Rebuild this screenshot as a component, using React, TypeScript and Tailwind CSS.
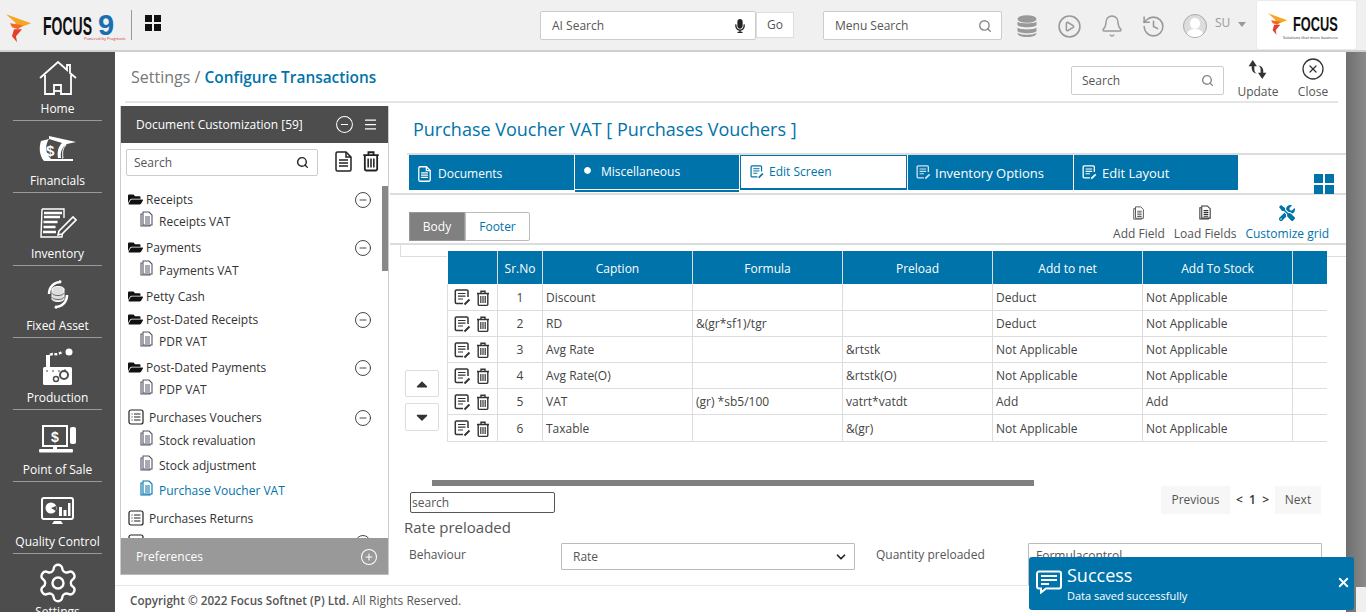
import React from "react";
import { Bell, History, CirclePlay, Search, CircleMinus, CirclePlus, CircleX, Menu, Settings, X, ChevronDown } from "lucide-react";
import { FaFolderOpen, FaMicrophone, FaTools, FaCaretUp, FaCaretDown, FaCircle } from "react-icons/fa";

const BLUE = "#0073aa";

function Flame({ s = 26 }: { s?: number }) {
  return (
    <svg width={s} height={s * 1.1} viewBox="0 0 26 28" className="shrink-0">
      <polygon points="0,0 25,9 12,14 9,8" fill="#f5a623" />
      <polygon points="4,9 17,11 12,15 6,13" fill="#f0692c" />
      <polygon points="8,15 16,15 10,22 11,28 6,22" fill="#e2402a" />
    </svg>
  );
}

function DocIcon({ color = "#444", s = 15 }: { color?: string; s?: number }) {
  return (
    <svg width={s} height={s} viewBox="0 0 16 16" fill="none" stroke={color} strokeWidth="1.1">
      <path d="M3.500 3H2v12h9v-1.500" />
      <path d="M4 1h6l3 3v10H4z" fill="#fff" />
      <path d="M6 6h5M6 8h5M6 10h5M6 12h5" />
    </svg>
  );
}

function ListBox() {
  return (
    <svg width="16" height="16" viewBox="0 0 16 16" fill="none" stroke="#222" strokeWidth="1.2">
      <rect x="1" y="1" width="14" height="14" rx="2" />
      <path d="M3.500 5h1M6 5h6.500M3.500 8h1M6 8h6.500M3.500 11h1M6 11h6.500" />
    </svg>
  );
}

function EditDoc({ color = "#333", s = 17 }: { color?: string; s?: number }) {
  return (
    <svg width={s} height={s} viewBox="0 0 17 17" fill="none" stroke={color} strokeWidth="1.5">
      <path d="M9 14.500H2.500a1.200 1.200 0 0 1-1.200-1.200V2.200A1.200 1.200 0 0 1 2.500 1h10.300A1.200 1.200 0 0 1 14 2.200V8" />
      <path d="M4 4.500h7.500M4 7.200h7.500M4 10h5" strokeWidth="1.2" />
      <path d="M10.500 15.500l5-5" strokeWidth="2" />
    </svg>
  );
}

function Trash({ color = "#333", w = 14, h = 16 }: { color?: string; w?: number; h?: number }) {
  return (
    <svg width={w} height={h} viewBox="0 0 14 16" fill="none" stroke={color} strokeWidth="1.4">
      <path d="M1 3.500h12M5 3.200V1.200h4v2" />
      <path d="M2.200 3.800v10.400a1.200 1.200 0 0 0 1.200 1.200h7.200a1.200 1.200 0 0 0 1.200-1.200V3.800" />
      <path d="M4.800 6v7M7 6v7M9.200 6v7" strokeWidth="1.2" />
    </svg>
  );
}

function PageIcon({ color = "#222", w = 17, h = 21, sw = 1.5 }: { color?: string; w?: number; h?: number; sw?: number }) {
  return (
    <svg width={w} height={h} viewBox="0 0 17 21" fill="none" stroke={color} strokeWidth={sw}>
      <path d="M2.500 1H11l5 5v12.500a1.500 1.500 0 0 1-1.500 1.500h-12A1.500 1.500 0 0 1 1 18.500v-16A1.500 1.500 0 0 1 2.500 1z" />
      <path d="M11 1v5h5" />
      <path d="M4 9h9M4 12h9M4 15h9" />
    </svg>
  );
}

function HouseIcon() {
  return (
    <svg width="38" height="34" viewBox="0 0 38 34" fill="none" stroke="#fff" strokeWidth="1.8">
      <path d="M1 17L19 1l9 8V4h3v8l6 5" strokeLinejoin="miter" />
      <path d="M6 14v19h9v-9h7v9h10V14" />
      <path d="M15 30h7" />
    </svg>
  );
}

function FinIcon() {
  return (
    <svg width="38" height="30" viewBox="0 0 38 30" fill="none">
      <path d="M2 6l8-2c-4 6-4 14 2 20H34v2H5C0 20 0 12 2 6z" fill="#fff" />
      <path d="M10 1l27 6-9 2c-5 3-7 8-6 14h-3c-1-6 0-11 4-15L10 4z" fill="#fff" />
      <path d="M27 10c-3 3-4 7-3 13h-1" stroke="#fff" />
      <text x="7" y="21" fontSize="15" fontWeight="700" fill="#fff" fontFamily="Liberation Sans">$</text>
    </svg>
  );
}

function InvIcon() {
  return (
    <svg width="38" height="32" viewBox="0 0 38 32" fill="none" stroke="#fff" strokeWidth="1.4">
      <path d="M3 2h22v9M3 2l-1 28h21l1-7" />
      <path d="M5 6h18M5 10h16M4.500 15h14M4.500 20h12M4 25h13" strokeWidth="2.400" />
      <path d="M20 24l14-14 3 3-14 14-4 1z" fill="#4d4d4d" strokeWidth="1.600" />
    </svg>
  );
}

function AssetIcon() {
  return (
    <svg width="24" height="29" viewBox="0 0 24 29" fill="none" stroke="#fff">
      <path d="M3 14C3 7 8 2 15 2l-2-1M21 15c0 7-5 12-12 12l2 1" strokeWidth="2.500" />
      <ellipse cx="12" cy="9" rx="6" ry="2.500" fill="#ddd" />
      <path d="M6 9v10c0 1.500 3 2.500 6 2.500s6-1 6-2.500V9" fill="#ddd" />
      <path d="M6 13c0 1.500 3 2.500 6 2.500s6-1 6-2.500M6 17c0 1.500 3 2.500 6 2.500s6-1 6-2.500" stroke="#666" />
    </svg>
  );
}

function ProdIcon() {
  return (
    <svg width="32" height="37" viewBox="0 0 32 37" fill="#fff">
      <rect x="4" y="7" width="4" height="14" />
      <path d="M8 7c3-2 5 0 8-1s3-2 5-2" stroke="#fff" strokeWidth="2.400" fill="none" strokeDasharray="3 1.500" />
      <circle cx="27" cy="4" r="3.500" />
      <rect x="1" y="19" width="29" height="18" rx="1.500" />
      <circle cx="22" cy="27" r="4" fill="none" stroke="#4d4d4d" strokeWidth="2" />
      <circle cx="14" cy="31" r="2.500" fill="none" stroke="#4d4d4d" strokeWidth="1.500" />
      <path d="M4 23h2M10 23h2M16 23h2M22 22h2" stroke="#4d4d4d" />
    </svg>
  );
}

function PosIcon() {
  return (
    <svg width="38" height="28" viewBox="0 0 38 28" fill="none">
      <rect x="4" y="1" width="24" height="20" stroke="#fff" strokeWidth="2" />
      <rect x="31" y="2" width="6" height="17" rx="2" fill="#fff" />
      <path d="M14 21h4v3h-4z" fill="#fff" />
      <rect x="0" y="24" width="34" height="3.500" rx="1" fill="#fff" />
      <text x="12" y="17" fontSize="14" fontWeight="700" fill="#fff" fontFamily="Liberation Sans">$</text>
    </svg>
  );
}

function QcIcon() {
  return (
    <svg width="33" height="28" viewBox="0 0 33 28" fill="none">
      <rect x="1" y="1" width="31" height="21" rx="2" stroke="#fff" strokeWidth="2" />
      <circle cx="10" cy="11" r="5.500" fill="#fff" />
      <path d="M10 11l5-2v5z" fill="#4d4d4d" />
      <path d="M18 10h3v9h-3zM22.500 13h3v6h-3zM27 6h2.500v13H27z" fill="#fff" />
      <path d="M13 24h7l2 3H11z" fill="#fff" />
    </svg>
  );
}

const navItems: [string, React.ReactNode][] = [
  ["Home", <HouseIcon key="h" />],
  ["Financials", <FinIcon key="f" />],
  ["Inventory", <InvIcon key="i" />],
  ["Fixed Asset", <AssetIcon key="a" />],
  ["Production", <ProdIcon key="p" />],
  ["Point of Sale", <PosIcon key="s" />],
  ["Quality Control", <QcIcon key="q" />],
];

type TreeRow = { t: string; kind: "folder" | "list" | "doc" | "active"; h: number; minus?: boolean };
const tree: TreeRow[] = [
  { t: "Receipts", kind: "folder", h: 22, minus: true },
  { t: "Receipts VAT", kind: "doc", h: 26 },
  { t: "Payments", kind: "folder", h: 23, minus: true },
  { t: "Payments VAT", kind: "doc", h: 26 },
  { t: "Petty Cash", kind: "folder", h: 23 },
  { t: "Post-Dated Receipts", kind: "folder", h: 22, minus: true },
  { t: "PDR VAT", kind: "doc", h: 26 },
  { t: "Post-Dated Payments", kind: "folder", h: 22, minus: true },
  { t: "PDP VAT", kind: "doc", h: 28 },
  { t: "Purchases Vouchers", kind: "list", h: 23, minus: true },
  { t: "Stock revaluation", kind: "doc", h: 25 },
  { t: "Stock adjustment", kind: "doc", h: 25 },
  { t: "Purchase Voucher VAT", kind: "active", h: 28 },
  { t: "Purchases Returns", kind: "list", h: 24 },
  { t: "", kind: "list", h: 24, minus: true },
];

const tabs: [string, React.ReactNode, string][] = [
  ["Documents", <PageIcon key="d" color="#fff" w={13} h={16} sw={1.7} />, "w-[165px] h-[35px] pl-[9px] gap-[7px] pt-[2px] bg-[#0073aa] text-white"],
  ["Miscellaneous", <FaCircle key="m" size={7} color="#fff" className="mb-[3px]" />, "w-[164px] h-[35px] pl-[9px] gap-[10px] bg-[#0073aa] text-white border-b-[1px] border-white shadow-[0_2px_0_#0073aa]"],
  ["Edit Screen", <EditDoc key="e" color={BLUE} s={14} />, "w-[167px] h-[35px] pl-[9px] gap-[5px] bg-white text-[#0073aa] border border-[#0073aa] border-b-2"],
  ["Inventory Options", <EditDoc key="n" color="#cfe3ee" s={15} />, "w-[165px] h-[35px] pl-[8px] gap-[4px] bg-[#0073aa] text-white text-[13px]"],
  ["Edit Layout", <EditDoc key="l" color="#fff" s={15} />, "w-[164px] h-[35px] pl-[8px] gap-[5px] bg-[#0073aa] text-white text-[13px]"],
];

const rows = [
  ["1", "Discount", "", "", "Deduct", "Not Applicable"],
  ["2", "RD", "&(gr*sf1)/tgr", "", "Deduct", "Not Applicable"],
  ["3", "Avg Rate", "", "&rtstk", "Not Applicable", "Not Applicable"],
  ["4", "Avg Rate(O)", "", "&rtstk(O)", "Not Applicable", "Not Applicable"],
  ["5", "VAT", "(gr) *sb5/100", "vatrt*vatdt", "Add", "Add"],
  ["6", "Taxable", "", "&(gr)", "Not Applicable", "Not Applicable"],
];

function Header() {
  return (
    <header className="h-[52px] shrink-0 bg-[#f0f0f0] border-b-2 border-[#cfcfcf] flex items-start relative">
      <div className="w-[132px] h-[30px] mt-[10px] flex items-start pl-[6px] border-r border-[#999] shrink-0 relative">
        <div className="mt-[4px]"><Flame /></div>
        <span className="ml-[11px] w-[55px] mt-[2px] text-[25px] leading-[28px] font-bold text-[#111] font-['Liberation_Sans'] scale-x-[0.56] origin-left inline-block">FOCUS</span>
        <span className="mt-[3px] text-[29px] leading-[24px] font-bold text-[#1a6fb0] font-['Liberation_Sans']">9</span>
        <span className="absolute left-[84px] top-[27px] text-[4px] leading-[4px] text-[#d0353a] whitespace-nowrap">Powered by Pragmatic</span>
      </div>
      <div className="ml-[13px] mt-[15px] grid grid-cols-2 gap-[2px] w-[16px] h-[16px]">
        <i className="bg-[#111]" /><i className="bg-[#111]" /><i className="bg-[#111]" /><i className="bg-[#111]" />
      </div>
      <div className="ml-[379px] mt-[11px] w-[216px] h-[29px] bg-white border border-[#ccc] rounded-[2px] flex items-center pl-[11px] pr-[8px] justify-between text-[#555]">
        <span>AI Search</span><FaMicrophone size={14} color="#222" />
      </div>
      <div className="mt-[12px] w-[38px] h-[26px] bg-white border border-[#ddd] flex items-center justify-center text-[#555]">Go</div>
      <div className="ml-[29px] mt-[11px] w-[179px] h-[29px] bg-white border border-[#ccc] rounded-[2px] flex items-center pl-[11px] pr-[9px] justify-between text-[#555]">
        <span>Menu Search</span><Search size={14} color="#888" strokeWidth={2.4} />
      </div>
      <div className="ml-[15px] mt-[15px]">
        <svg width="20" height="22" viewBox="0 0 20 22" fill="#999">
          <ellipse cx="10" cy="4" rx="9.500" ry="3.800" />
          <path d="M.5 6.500C2 9 18 9 19.500 6.500V10C18 13 2 13 .5 10zM.5 12.500C2 15 18 15 19.500 12.500V16C18 19 2 19 .5 16z" />
          <path d="M.5 17.500c2 3 17 3 19 0 0 3-3 4.500-9.500 4.500S.5 20.500 .5 17.500z" />
        </svg>
      </div>
      <div className="ml-[20px] mt-[14px]"><CirclePlay size={25} color="#999" strokeWidth={1.5} /></div>
      <div className="ml-[18px] mt-[14px]"><Bell size={24} color="#999" strokeWidth={1.4} /></div>
      <div className="ml-[17px] mt-[14px]"><History size={25} color="#999" strokeWidth={1.5} /></div>
      <div className="ml-[17px] mt-[14px] w-[24px] h-[24px] rounded-full border border-[#aaa] bg-[#ddd] overflow-hidden flex flex-col items-center">
        <i className="block w-[10px] h-[13px] mt-[3px] rounded-full bg-white" />
        <i className="block w-[18px] h-[10px] rounded-t-full bg-white" />
      </div>
      <span className="ml-[8px] w-[16px] mt-[14px] text-[12px] text-[#999]">SU</span>
      <i className="ml-[7px] mt-[22px] border-x-[4px] border-x-transparent border-t-[5px] border-t-[#999]" />
      <div className="ml-[11px] mt-[1px] w-[99px] h-[48px] bg-white rounded-[2px] flex items-start pl-[11px] pt-[12px] shadow-[0_0_2px_#ddd] relative">
        <Flame s={20} />
        <span className="ml-[5px] w-[46px] text-[21px] leading-[22px] font-bold text-[#111] font-['Liberation_Sans'] scale-x-[0.61] origin-left inline-block">FOCUS</span>
        <span className="absolute left-[26px] top-[34px] text-[4px] leading-[5px] text-[#333] whitespace-nowrap">Solutions that move business</span>
      </div>
    </header>
  );
}

function Sidebar() {
  return (
    <nav className="w-[115px] shrink-0 bg-[#4d4d4d] flex flex-col items-center text-white overflow-hidden">
      {navItems.map(([label, icon]) => (
        <div key={label} className="w-[89px] h-[72.2px] shrink-0 first:-mt-[3px] border-b border-[#999] flex flex-col items-center justify-end pb-[2px]">
          <div className="h-[40px] flex items-center justify-center">{icon}</div>
          <span className="mt-[2px] text-[12px] leading-[18px] whitespace-nowrap">{label}</span>
        </div>
      ))}
      <div className="pt-[7px] flex flex-col items-center shrink-0">
        <Settings size={44} color="#fff" strokeWidth={1.3} />
        <span className="text-[12px] leading-[18px] -mt-[2px]">Settings</span>
      </div>
    </nav>
  );
}

function LeftPanel() {
  return (
    <aside className="w-[269px] h-[469px] ml-[5px] mt-[3px] shrink-0 flex flex-col border-l border-r border-[#ccc] relative">
      <div className="h-[37px] shrink-0 bg-[#4d4d4d] text-white flex items-center pl-[15px] pr-[10px]">
        <span className="flex-1">Document Customization [59]</span>
        <CircleMinus size={19} strokeWidth={1.3} />
        <Menu size={15} className="ml-[9px]" />
      </div>
      <div className="flex items-start pt-[6px] pl-[5px] shrink-0">
        <div className="w-[192px] h-[27px] border border-[#ccc] rounded-[2px] flex items-center justify-between pl-[7px] pr-[8px] text-[#555]">
          <span>Search</span><Search size={13} color="#222" strokeWidth={2.6} />
        </div>
        <div className="ml-[17px] mt-[2px]"><PageIcon /></div>
        <div className="ml-[10px] mt-[1px]"><Trash color="#222" w={18} h={22} /></div>
      </div>
      <div className="flex-1 overflow-hidden pt-[15px] pl-[7px] pr-[16px] text-[#333] relative">
        {tree.map((r, i) => (
          <div key={i} style={{ height: r.h }} className={`flex items-start ${r.kind === "doc" || r.kind === "active" ? "pl-[11px]" : ""}`}>
            {r.kind === "folder" && <FaFolderOpen size={15} color="#111" className="mr-[3px] mt-[1px] shrink-0" />}
            {r.kind === "list" && <span className="mr-[5px] shrink-0 flex"><ListBox /></span>}
            {r.kind === "doc" && <span className="mr-[4px] shrink-0 flex -mt-[2px]"><DocIcon color="#556" s={16} /></span>}
            {r.kind === "active" && <span className="mr-[4px] shrink-0 flex -mt-[2px]"><DocIcon color={BLUE} s={16} /></span>}
            <span className={`flex-1 leading-[18px] whitespace-nowrap ${r.kind === "active" ? "text-[#0073aa]" : ""}`}>{r.t}</span>
            {r.minus && <CircleMinus size={18} color="#333" strokeWidth={1.2} />}
          </div>
        ))}
        <div className="absolute right-0 top-[10px] w-[6px] h-[85px] bg-[#888]" />
      </div>
      <div className="h-[37px] shrink-0 bg-[#999] text-white flex items-center pl-[15px] pr-[10px] pt-[2px] border-b border-[#bbb]">
        <span className="flex-1">Preferences</span>
        <CirclePlus size={18} strokeWidth={1.4} />
      </div>
    </aside>
  );
}

function ActionBtn({ icon, label, blue }: { icon: React.ReactNode; label: string; blue?: boolean }) {
  return (
    <div className={`flex flex-col items-center ${blue ? "text-[#0073aa]" : "text-[#555]"}`}>
      <div className="h-[17px] flex items-center">{icon}</div>
      <span className="text-[12px] leading-[18px] mt-[4px] whitespace-nowrap">{label}</span>
    </div>
  );
}

function RightPanel() {
  return (
    <section className="flex-1 min-w-0 overflow-hidden pl-[1px] h-[482px]">
      <h1 className="ml-[23px] mt-[13px] text-[18px] leading-[26px] text-[#0073aa] font-normal">Purchase Voucher VAT [ Purchases Vouchers ]</h1>
      <div className="mt-[11px] border-t-2 border-[#ddd] ml-[17px] mr-[13px]" />
      <div className="relative h-[40px] border-b-2 border-[#ddd] flex items-start pl-[19px] gap-[1px] mr-[9px]">
        {tabs.map(([label, icon, cls]) => (
          <div key={label} className={`flex items-center shrink-0 ${cls}`}>{icon}<span>{label}</span></div>
        ))}
        <div className="absolute left-[924px] top-[19px] grid grid-cols-2 gap-[2px] w-[20px] h-[20px]">
          <i className="bg-[#0073aa]" /><i className="bg-[#0073aa]" /><i className="bg-[#0073aa]" /><i className="bg-[#0073aa]" />
        </div>
      </div>
      <div className="h-[50px] flex items-start pl-[19px] pr-[28px] border-b-2 border-[#ddd] mr-[9px] pt-[17px]">
        <div className="w-[56px] h-[29px] bg-[#808080] text-white flex items-center justify-center border border-[#999]">Body</div>
        <div className="w-[65px] h-[29px] border border-[#bbb] rounded-r-[2px] flex items-center justify-center text-[#0073aa]">Footer</div>
        <div className="flex-1 flex justify-end gap-[9px] -mt-[8px]">
          <ActionBtn label="Add Field" icon={<DocIcon color="#555" s={14} />} />
          <ActionBtn label="Load Fields" icon={<DocIcon color="#333" s={15} />} />
          <ActionBtn blue label="Customize grid" icon={<FaTools size={16} color={BLUE} />} />
        </div>
      </div>
      <div className="ml-[10px] mr-[14px] h-[12px] border border-t-0 border-[#ddd] relative">
        <table className="absolute left-[46px] top-[6px] w-[879px] table-fixed border-collapse text-[#444] bg-white z-10">
          <colgroup>
            <col className="w-[50px]" /><col className="w-[45px]" /><col className="w-[150px]" /><col className="w-[150px]" /><col className="w-[150px]" /><col className="w-[150px]" /><col className="w-[150px]" /><col className="w-[34px]" />
          </colgroup>
          <thead>
            <tr className="bg-[#0073aa] text-white h-[33px]">
              {["", "Sr.No", "Caption", "Formula", "Preload", "Add to net", "Add To Stock", ""].map((h, i) => (
                <th key={i} className="font-normal border-l border-[#ddd] first:border-l-0 px-0 pt-[2px]">{h}</th>
              ))}
            </tr>
          </thead>
          <tbody>
            {rows.map((r) => (
              <tr key={r[0]} className="h-[26px] last:h-[27px] border-b border-[#ddd]">
                <td className="border-l border-[#ddd] pl-[6px] pt-[2px]">
                  <div className="flex items-center gap-[5px]"><EditDoc /><Trash /></div>
                </td>
                <td className="border-l border-[#ddd] text-center pt-[2px]">{r[0]}</td>
                {r.slice(1).map((c, j) => (
                  <td key={j} className="border-l border-[#ddd] pl-[3px] pt-[2px] whitespace-nowrap overflow-hidden">{c}</td>
                ))}
                <td className="border-l border-[#ddd]" />
              </tr>
            ))}
          </tbody>
        </table>
      </div>
      <div className="ml-[15px] mt-[113px] flex flex-col gap-[6px] w-[34px]">
        <div className="h-[27px] border border-[#ddd] rounded-[2px] flex items-center justify-center"><FaCaretUp size={18} color="#333" /></div>
        <div className="h-[28px] border border-[#ddd] rounded-[2px] flex items-center justify-center"><FaCaretDown size={18} color="#333" /></div>
      </div>
      <div className="ml-[42px] mt-[49px] h-[6px] w-[602px] bg-[#808080]" />
      <div className="flex items-start h-[29px] mr-[45px]">
        <input readOnly value="search" className="ml-[20px] mt-[6px] w-[145px] h-[21px] border border-[#555] rounded-[2px] px-[1px] text-[12px] text-[#555] outline-none" />
        <div className="flex-1 flex justify-end items-center text-[#555] text-[12px]">
          <span className="w-[69px] h-[28px] bg-[#f7f7f7] flex items-center justify-center">Previous</span>
          <span className="w-[45px] text-center text-[#333] font-semibold">&lt;&nbsp; 1 &nbsp;&gt;</span>
          <span className="w-[46px] h-[28px] bg-[#f7f7f7] flex items-center justify-center">Next</span>
        </div>
      </div>
      <h2 className="ml-[14px] text-[15px] leading-[24px] font-normal text-[#555]">Rate preloaded</h2>
      <div className="flex items-start mt-[4px] text-[#555]">
        <span className="ml-[19px] w-[152px] leading-[24px]">Behaviour</span>
        <div className="w-[294px] h-[27px] border border-[#bbb] rounded-[1px] flex items-center justify-between pl-[11px] pr-[6px]">
          <span>Rate</span><ChevronDown size={14} color="#222" strokeWidth={3} />
        </div>
        <span className="ml-[21px] w-[152px] leading-[24px]">Quantity preloaded</span>
        <div className="w-[294px] h-[44px] border border-[#bbb] rounded-[1px] pl-[7px] pt-[3px]">Formulacontrol</div>
      </div>
      <div className="ml-[171px] mt-[11px] w-[294px] h-[20px] border border-[#ccc]" />
    </section>
  );
}

export default function App() {
  return (
    <div className="w-[1366px] h-[612px] overflow-hidden relative bg-white font-['Open_Sans',sans-serif] text-[12px] leading-[18px] flex flex-col">
      <Header />
      <div className="flex-1 flex min-h-0">
        <Sidebar />
        <main className="flex-1 min-w-0 flex flex-col">
          <div className="h-[51px] shrink-0 ml-[10px] mr-[28px] pr-[3px] border-b-2 border-[#e5e5e5] flex items-start">
            <div className="pl-[6px] pt-[12px] text-[16px] leading-[26px] text-[#777] flex-1">
              Settings / <span className="text-[#0073aa] font-semibold text-[15.4px]">Configure Transactions</span>
            </div>
            <div className="mt-[14px] w-[153px] h-[29px] border border-[#ccc] rounded-[2px] flex items-center justify-between pl-[10px] pr-[9px] text-[#555]">
              <span>Search</span><Search size={13} color="#888" strokeWidth={2.6} />
            </div>
            <div className="ml-[12px] w-[44px] mt-[7px] flex flex-col items-center text-[#555]">
              <svg width="22" height="21" viewBox="0 0 20 20" fill="#333">
                <path d="M5 1l4 6H6.500v3c0 2 1 3 2.500 4-3-.5-5-2.500-5-5V7H1z" />
                <path d="M14 19l-4-6h2.500v-3c0-2-1-3-2.500-4 3 .5 5 2.500 5 5v2h3z" />
              </svg>
              <span className="mt-[3px]">Update</span>
            </div>
            <div className="ml-[11px] w-[44px] mt-[5px] flex flex-col items-center text-[#555]">
              <CircleX size={24} color="#333" strokeWidth={1.3} />
              <span className="mt-[2px]">Close</span>
            </div>
          </div>
          <div className="flex min-h-0 h-[482px] overflow-hidden">
            <LeftPanel />
            <RightPanel />
          </div>
          <div className="flex-1 border-t border-[#e5e5e5] bg-white pl-[15px] pt-[5px] text-[#555] relative z-20 mr-[20px]">
            <span className="font-semibold text-[11.7px]">Copyright © 2022 Focus Softnet (P) Ltd.</span> All Rights Reserved.
          </div>
        </main>
      </div>
      <div className="absolute right-0 top-[52px] bottom-0 w-[20px] bg-gradient-to-r from-[#6f6f6f] to-[#8a8a8a] z-20" />
      <div className="absolute right-0 top-[587px] bottom-0 w-[10px] bg-[#f0f0f0] z-20" />
      <div className="absolute left-[1029px] top-[557px] w-[325px] h-[53px] bg-[#0073aa] rounded-[3px] text-white flex items-start pl-[7px] pr-[3px] z-30">
        <svg width="26" height="24" viewBox="0 0 26 24" fill="none" className="mt-[13px] shrink-0">
          <path d="M3 1.500h20a2 2 0 0 1 2 2v13a2 2 0 0 1-2 2H10l-5 4v-4H3a2 2 0 0 1-2-2v-13a2 2 0 0 1 2-2z" stroke="#fff" strokeWidth="2" />
          <path d="M5 6h16M5 10h16M5 14h8" stroke="#fff" strokeWidth="2" />
        </svg>
        <div className="ml-[5px] flex-1">
          <div className="text-[18px] leading-[24px] mt-[6px]">Success</div>
          <div className="text-[11px] leading-[14px] mt-[2px]">Data saved successfully</div>
        </div>
        <X size={15} strokeWidth={3} className="mt-[18px]" />
      </div>
    </div>
  );
}
